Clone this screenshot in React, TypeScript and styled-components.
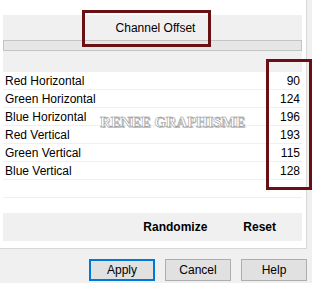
import styled, { createGlobalStyle } from "styled-components";

const GlobalStyle = createGlobalStyle`
  html, body {
    margin: 0;
    padding: 0;
    background: #f0f0f0;
  }
  body {
    font-family: "Liberation Sans", Arial, sans-serif;
    font-size: 12px;
    color: #000;
  }
`;

const Dialog = styled.div`
  position: relative;
  width: 312px;
  height: 283px;
  background: #f0f0f0;
  overflow: hidden;
`;

const Sheet = styled.div`
  width: 303px;
  height: 233px;
  padding: 15px 0 0 3px;
  background: #ffffff;
  border-right: 1px solid #d8d8d8;
  border-bottom: 1px solid #d8d8d8;
  display: flex;
  flex-direction: column;
`;

const Header = styled.div`
  width: 299px;
  height: 57px;
  background: #f0f0f0;
  display: flex;
  flex-direction: column;
`;

const Title = styled.div`
  height: 25px;
  display: flex;
  align-items: center;
  justify-content: center;
  padding-left: 6px;
`;

const Track = styled.div`
  height: 9px;
  background: #e6e6e6;
  border: 1px solid #c4c4c4;
`;

const Rows = styled.div`
  width: 299px;
  display: flex;
  flex-direction: column;
`;

const Row = styled.div`
  height: 17px;
  display: flex;
  align-items: center;
  justify-content: space-between;
  padding: 0 2px 0 2px;
  border-bottom: 1px solid #efefef;
`;

const Value = styled.span`
  text-align: right;
`;

const ActionBar = styled.div`
  margin-top: 15px;
  width: 299px;
  height: 28px;
  background: #f0f0f0;
  display: flex;
  align-items: center;
  justify-content: flex-end;
  gap: 36px;
  padding-right: 26px;
  box-sizing: border-box;
  font-weight: bold;
`;

const Buttons = styled.div`
  display: flex;
  justify-content: flex-end;
  gap: 10px;
  padding: 10px 5px 0 0;
`;

const Button = styled.div<{ $primary?: boolean }>`
  width: 66px;
  height: 22px;
  box-sizing: border-box;
  display: flex;
  align-items: center;
  justify-content: center;
  background: #e1e1e1;
  border: ${(p) => (p.$primary ? "2px solid #0078d7" : "1px solid #adadad")};
`;

const Mark = styled.div<{ $x: number; $y: number; $w: number; $h: number }>`
  position: absolute;
  left: ${(p) => p.$x}px;
  top: ${(p) => p.$y}px;
  width: ${(p) => p.$w}px;
  height: ${(p) => p.$h}px;
  box-sizing: border-box;
  border: 3px solid #6a1014;
  pointer-events: none;
`;

const Watermark = styled.div`
  position: absolute;
  left: 100px;
  top: 114px;
  font-family: "Liberation Serif", "Times New Roman", serif;
  font-size: 15px;
  font-weight: bold;
  letter-spacing: -0.2px;
  color: #ffffff;
  -webkit-text-stroke: 0.5px #8c8c8c;
  text-shadow: 1px 1px 0 #d0d0d0;
  pointer-events: none;
`;

const ROWS: [string, number][] = [
  ["Red Horizontal", 90],
  ["Green Horizontal", 124],
  ["Blue Horizontal", 196],
  ["Red Vertical", 193],
  ["Green Vertical", 115],
  ["Blue Vertical", 128],
];

const App = () => {
  return (
    <>
      <GlobalStyle />
      <Dialog>
        <Sheet>
          <Header>
            <Title>Channel Offset</Title>
            <Track />
          </Header>
          <Rows>
            {ROWS.map(([label, value]) => (
              <Row key={label}>
                <span>{label}</span>
                <Value>{value}</Value>
              </Row>
            ))}
            <Row />
          </Rows>
          <ActionBar>
            <span>Randomize</span>
            <span>Reset</span>
          </ActionBar>
        </Sheet>
        <Buttons>
          <Button $primary>Apply</Button>
          <Button>Cancel</Button>
          <Button>Help</Button>
        </Buttons>
        <Watermark>RENEE GRAPHISME</Watermark>
        <Mark $x={82} $y={10} $w={129} $h={37} />
        <Mark $x={266} $y={59} $w={46} $h={131} />
      </Dialog>
    </>
  );
};

export default App;
